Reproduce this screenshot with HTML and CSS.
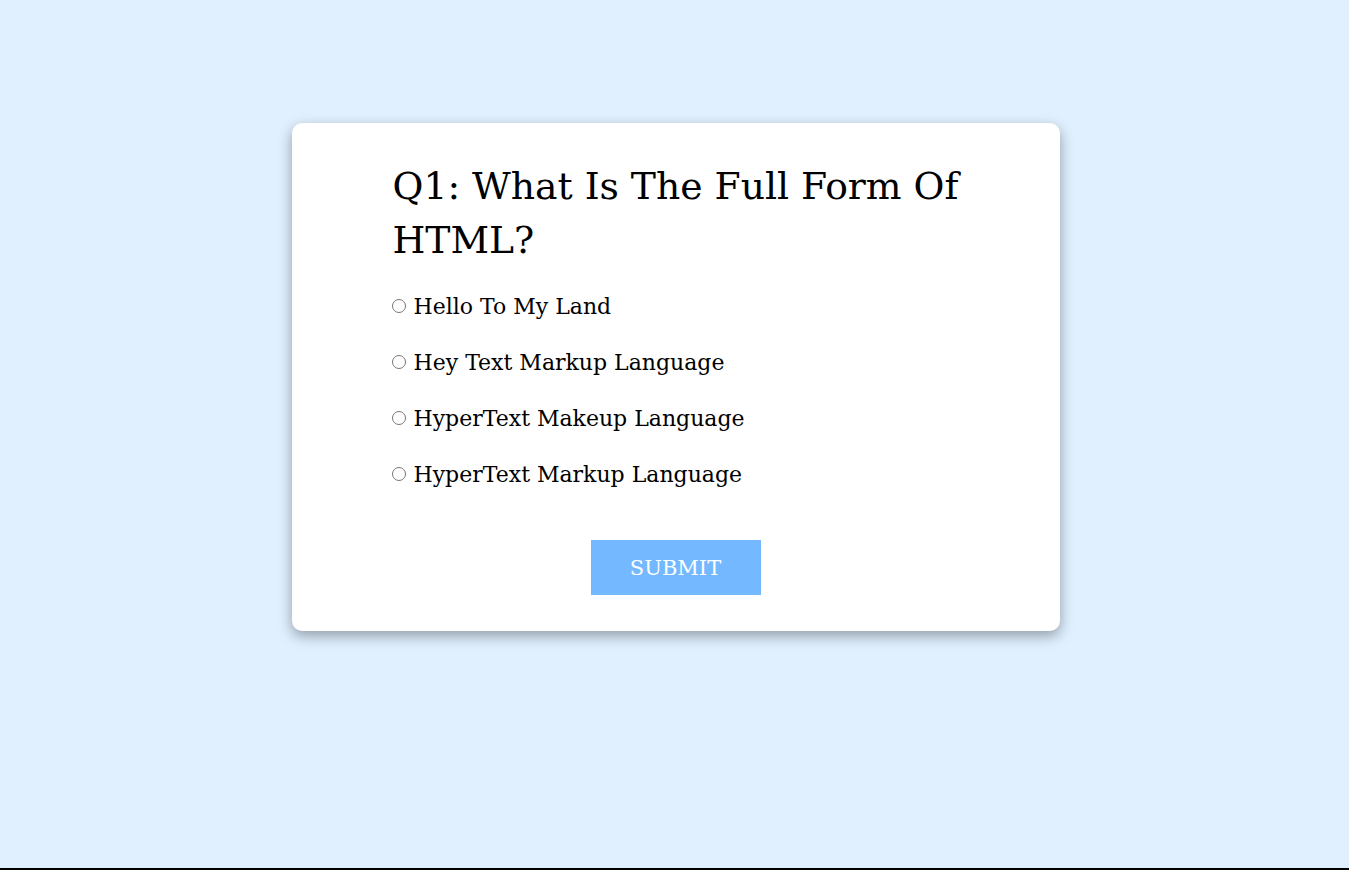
FILE: index.html
```html
<!DOCTYPE html>
<html lang="en">
<head>
<meta charset="utf-8">
<title>Quiz</title>
<link rel="stylesheet" href="styles.css">
</head>
<body>
<div class="page">
  <div class="card">
    <div class="quiz">
      <h2 class="question">Q1: What Is The Full Form Of HTML?</h2>
      <ul class="options">
        <li><label><input type="radio" name="ans"> Hello To My Land</label></li>
        <li><label><input type="radio" name="ans"> Hey Text Markup Language</label></li>
        <li><label><input type="radio" name="ans"> HyperText Makeup Language</label></li>
        <li><label><input type="radio" name="ans"> HyperText Markup Language</label></li>
      </ul>
    </div>
    <div class="actions">
      <button class="submit">SUBMIT</button>
    </div>
  </div>
</div>
</body>
</html>
```
FILE: styles.css
```css
* { box-sizing: border-box; }
html, body { margin: 0; padding: 0; }
body {
  background: #e0f0ff;
  font-family: "DejaVu Serif", "Liberation Serif", serif;
}
.page {
  height: 870px;
  border-bottom: 2px solid #000;
  display: flex;
  justify-content: center;
  align-items: flex-start;
  padding-top: 123px;
  padding-left: 2px;
}
.card {
  width: 768px;
  background: #fff;
  border-radius: 10px;
  box-shadow: 0 5px 14px rgba(0, 0, 0, 0.35);
  padding: 36px 70px 36px 101px;
}
.question {
  margin: 0 0 11px;
  font-weight: 400;
  font-size: 37.7px;
  line-height: 54px;
  color: #000;
}
.options {
  list-style: none;
  margin: 0;
  padding: 0;
}
.options li {
  height: 56px;
  display: flex;
  align-items: center;
  font-size: 22px;
}
.options label {
  display: flex;
  align-items: center;
  gap: 8px;
}
.options input {
  margin: 0 0 0 -1px;
  width: 14px;
  height: 14px;
}
.actions {
  display: flex;
  justify-content: center;
  margin-top: 38px;
  margin-left: -31px;
}
.submit {
  width: 170px;
  height: 55px;
  border: none;
  background: #74b9ff;
  color: #fff;
  font-family: inherit;
  font-size: 21px;
  cursor: pointer;
}
```
